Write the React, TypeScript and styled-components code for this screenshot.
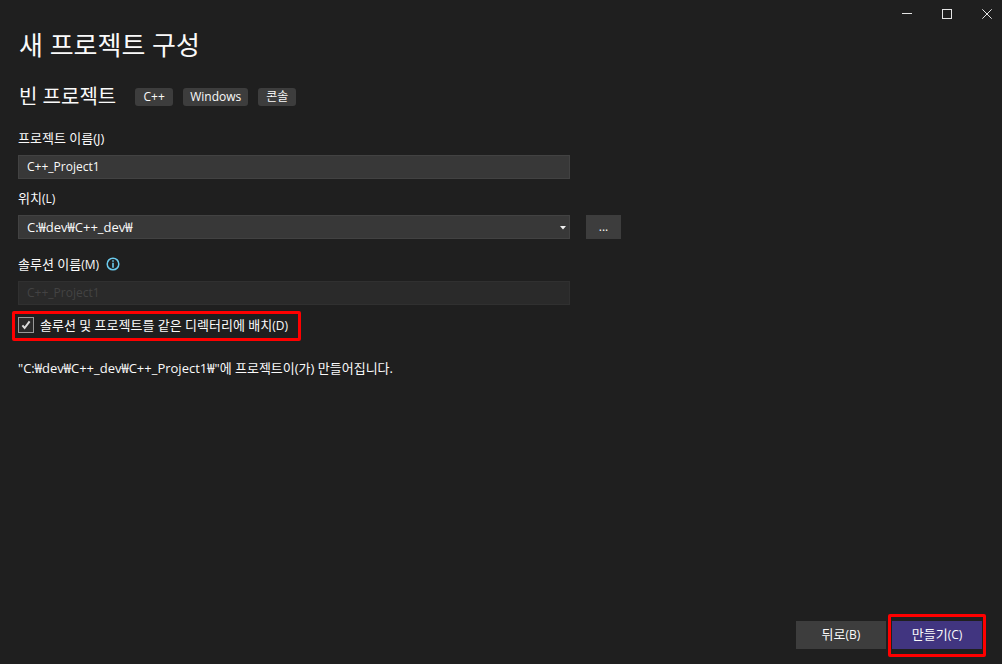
import React from "react";
import styled, { createGlobalStyle } from "styled-components";

const GlobalStyle = createGlobalStyle`
  * { box-sizing: border-box; }
  body {
    margin: 0;
    background: #1f1f1f;
    color: #fafafa;
    font-family: "Open Sans", "Noto Sans CJK KR", sans-serif;
    font-size: 13px;
    line-height: 20px;
  }
  button, input, select { font: inherit; color: inherit; margin: 0; }
`;

const Window = styled.div`
  display: flex;
  flex-direction: column;
  min-height: 100vh;
`;

const TitleBar = styled.header`
  display: flex;
  justify-content: flex-end;
  height: 28px;
`;

const CaptionButton = styled.button`
  display: flex;
  align-items: center;
  justify-content: center;
  width: 40px;
  padding: 0;
  border: 0;
  background: transparent;
  &:last-child { width: 35px; padding-left: 5px; }
`;

const Content = styled.main`
  flex: 1;
  padding: 0 18px;
`;

const Title = styled.h1`
  margin: 0;
  padding-left: 1px;
  font-size: 26px;
  font-weight: 400;
  line-height: 34px;
`;

const Template = styled.div`
  display: flex;
  align-items: center;
  gap: 10px;
  margin: 20px 0 16px;
`;

const TemplateName = styled.h2`
  margin: 0 9px 0 0;
  padding-left: 1px;
  font-size: 20px;
  font-weight: 400;
  line-height: 30px;
`;

const Tag = styled.span`
  min-width: 38px;
  padding: 0 7px;
  border-radius: 3px;
  background: #3d3d3d;
  font-size: 12px;
  line-height: 18px;
  text-align: center;
`;

const Latin = styled.span`
  font-size: 12px;
`;

const Field = styled.div<{ $gap?: number }>`
  margin-bottom: ${(p) => p.$gap ?? 9}px;
`;

const LabelRow = styled.div`
  display: flex;
  align-items: center;
  gap: 7px;
  height: 20px;
  margin-bottom: 7px;
`;

const ControlRow = styled.div`
  display: flex;
  gap: 16px;
`;

const ControlBox = styled.div`
  position: relative;
  flex: 0 1 552px;
  min-width: 0;
  display: flex;
`;

const TextBox = styled.input`
  width: 100%;
  height: 24px;
  padding: 0 8px 2px;
  border: 1px solid #424242;
  border-radius: 0;
  background: #383838;
  font-size: 12px;
  &:disabled {
    border-color: #303030;
    background: #2a2a2a;
    color: #434343;
  }
`;

const Select = styled.select`
  appearance: none;
  width: 100%;
  height: 24px;
  padding: 0 8px;
  border: 1px solid #424242;
  border-radius: 0;
  background: #383838;
  font-size: 13px;
`;

const Arrow = styled.svg`
  position: absolute;
  right: 4px;
  top: 11px;
  pointer-events: none;
`;

const BrowseButton = styled.button`
  width: 35px;
  height: 24px;
  padding: 0;
  border: 0;
  background: #3d3d3d;
  font-size: 12px;
`;

const HighlightedOption = styled.label`
  display: flex;
  align-items: center;
  gap: 6px;
  width: fit-content;
  height: 30px;
  margin-left: -6px;
  padding: 0 10px 2px 3px;
  border: 3px solid #ff0000;
  border-radius: 2px;
`;

const CheckBox = styled.span`
  position: relative;
  display: flex;
  width: 16px;
  height: 16px;
  svg {
    position: absolute;
    inset: 0;
    pointer-events: none;
  }
  input {
    appearance: none;
    width: 16px;
    height: 16px;
    border: 1px solid #999999;
    background: #2b2b2b;
  }
  input:not(:checked) + svg { display: none; }
`;

const Message = styled.p`
  margin: 17px 0 0;
`;

const Footer = styled.footer`
  display: flex;
  justify-content: flex-end;
  align-items: baseline;
  gap: 2px;
  padding: 0 16px 7px;
`;

const ActionButton = styled.button<{ $primary?: boolean }>`
  display: block;
  width: 90px;
  height: 28px;
  padding: 0 0 1px;
  border: 0;
  background: ${(p) => (p.$primary ? "#413580" : "#3d3d3d")};
`;

const Highlight = styled.div`
  padding: 4px 1px 5px;
  border: 3px solid #ff0000;
  border-radius: 2px;
`;

export default function App() {
  return (
    <Window>
      <GlobalStyle />
      <TitleBar>
        <CaptionButton aria-label="최소화">
          <svg width="10" height="10" shapeRendering="crispEdges">
            <path d="M0 4h10v1H0z" fill="#e4e4e4" />
          </svg>
        </CaptionButton>
        <CaptionButton aria-label="최대화">
          <svg width="10" height="10" shapeRendering="crispEdges">
            <rect x="0.5" y="0.5" width="9" height="9" fill="none" stroke="#e4e4e4" />
          </svg>
        </CaptionButton>
        <CaptionButton aria-label="닫기">
          <svg width="10" height="10">
            <path d="M0.3 0.3l9.4 9.4M9.7 0.3L0.3 9.7" stroke="#e4e4e4" strokeWidth="1" />
          </svg>
        </CaptionButton>
      </TitleBar>
      <Content>
        <Title>새 프로젝트 구성</Title>
        <Template>
          <TemplateName>빈 프로젝트</TemplateName>
          <Tag>C++</Tag>
          <Tag>Windows</Tag>
          <Tag>콘솔</Tag>
        </Template>
        <Field>
          <LabelRow>
            <label htmlFor="project">프로젝트 이름(J)</label>
          </LabelRow>
          <ControlRow>
            <ControlBox>
              <TextBox id="project" defaultValue="C++_Project1" />
            </ControlBox>
          </ControlRow>
        </Field>
        <Field $gap={15}>
          <LabelRow>
            <label htmlFor="location">위치<Latin>(L)</Latin></label>
          </LabelRow>
          <ControlRow>
            <ControlBox>
              <Select id="location">
                <option>C:₩dev₩C++_dev₩</option>
              </Select>
              <Arrow width="6" height="4">
                <path d="M0 0h6L3 3.5z" fill="#f0f0f0" />
              </Arrow>
            </ControlBox>
            <BrowseButton aria-label="찾아보기">...</BrowseButton>
          </ControlRow>
        </Field>
        <Field $gap={6}>
          <LabelRow>
            <label htmlFor="solution">솔루션 이름<Latin>(M)</Latin></label>
            <svg width="14" height="14" viewBox="0 0 14 14">
              <circle cx="7" cy="7" r="5.8" fill="none" stroke="#6bcbee" strokeWidth="1.5" />
              <path d="M6.2 3.2h1.6v1.6H6.2zM6.2 5.8h1.6v5H6.2z" fill="#6bcbee" />
            </svg>
          </LabelRow>
          <ControlRow>
            <ControlBox>
              <TextBox id="solution" defaultValue="C++_Project1" disabled />
            </ControlBox>
          </ControlRow>
        </Field>
        <HighlightedOption>
          <CheckBox>
            <input type="checkbox" defaultChecked />
            <svg width="16" height="16" viewBox="0 0 16 16">
              <path d="M4.4 8.4L6.6 11 11.6 4.4" fill="none" stroke="#dcdcdc" strokeWidth="2" />
            </svg>
          </CheckBox>
          <span>솔루션 및 프로젝트를 같은 디렉터리에 배치<Latin>(D)</Latin></span>
        </HighlightedOption>
        <Message>"C:₩dev₩C++_dev₩C++_Project1₩"에 프로젝트이(가) 만들어집니다.</Message>
      </Content>
      <Footer>
        <ActionButton>뒤로<Latin>(B)</Latin></ActionButton>
        <Highlight>
          <ActionButton $primary>만들기<Latin>(C)</Latin></ActionButton>
        </Highlight>
      </Footer>
    </Window>
  );
}
